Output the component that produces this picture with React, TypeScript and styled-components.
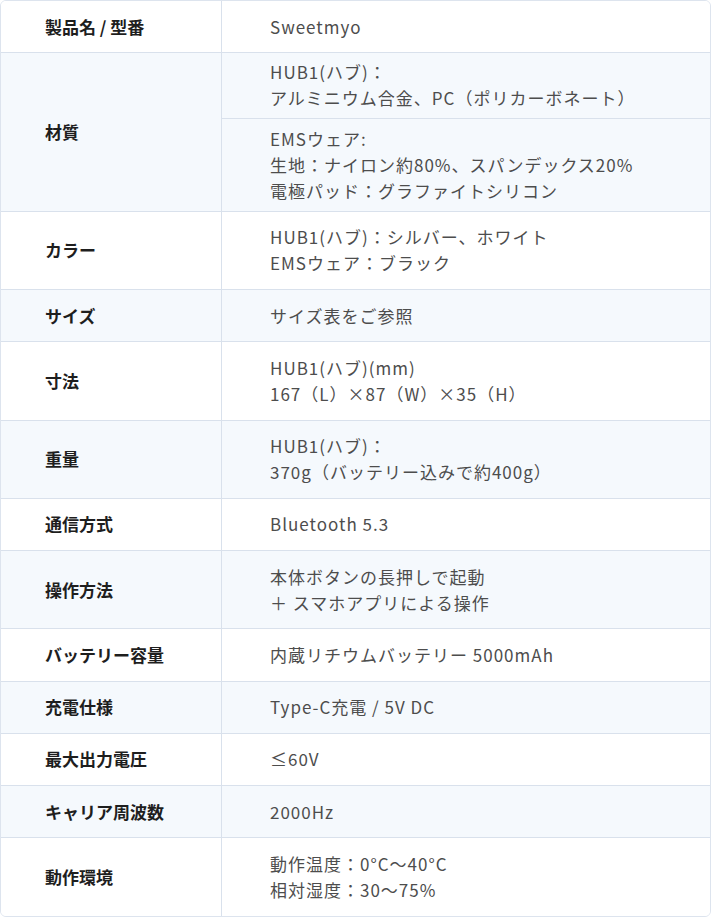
import React from 'react'
import styled, { createGlobalStyle } from 'styled-components'

const GlobalStyle = createGlobalStyle`
  body {
    margin: 0;
    background: #ffffff;
    font-family: "Noto Sans CJK JP", "Noto Sans", sans-serif;
  }
`

const Table = styled.div`
  width: 711px;
  box-sizing: border-box;
  border: 1px solid #dde4ee;
  border-radius: 6px;
  overflow: hidden;
`

const Row = styled.div<{ $alt: boolean }>`
  display: grid;
  grid-template-columns: 221px 1fr;
  background: ${p => (p.$alt ? '#f5f9fd' : '#ffffff')};
  & + & {
    border-top: 1px solid #d9e1ec;
  }
`

const Label = styled.div`
  display: flex;
  align-items: center;
  box-sizing: border-box;
  padding: 12.63px 16px 12.63px 44px;
  border-right: 1px solid #d9e1ec;
  font-size: 17px;
  line-height: 26px;
  font-weight: 700;
  color: #1e1e1e;
`

const Value = styled.div`
  display: flex;
  flex-direction: column;
  justify-content: center;
  padding: 12.63px 16px 12.63px 48px;
  font-size: 17px;
  line-height: 26px;
  letter-spacing: 1px;
  color: #4d4d4d;
`

const SubList = styled.div`
  display: flex;
  flex-direction: column;
`

const SubCell = styled.div`
  padding: 6px 16px 7px 48px;
  font-size: 17px;
  line-height: 26px;
  letter-spacing: 1px;
  color: #4d4d4d;
  & + & {
    border-top: 1px solid #d9e1ec;
    padding-top: 6.5px;
  }
`

type Spec = { label: string; lines?: string[]; groups?: string[][] }

const specs: Spec[] = [
  { label: '製品名 / 型番', lines: ['Sweetmyo'] },
  {
    label: '材質',
    groups: [
      ['HUB1(ハブ)：', 'アルミニウム合金、PC（ポリカーボネート）'],
      ['EMSウェア:', '生地：ナイロン約80%、スパンデックス20%', '電極パッド：グラファイトシリコン'],
    ],
  },
  { label: 'カラー', lines: ['HUB1(ハブ)：シルバー、ホワイト', 'EMSウェア：ブラック'] },
  { label: 'サイズ', lines: ['サイズ表をご参照'] },
  { label: '寸法', lines: ['HUB1(ハブ)(mm)', '167（L）×87（W）×35（H）'] },
  { label: '重量', lines: ['HUB1(ハブ)：', '370g（バッテリー込みで約400g）'] },
  { label: '通信方式', lines: ['Bluetooth 5.3'] },
  { label: '操作方法', lines: ['本体ボタンの長押しで起動', '＋ スマホアプリによる操作'] },
  { label: 'バッテリー容量', lines: ['内蔵リチウムバッテリー 5000mAh'] },
  { label: '充電仕様', lines: ['Type-C充電 / 5V DC'] },
  { label: '最大出力電圧', lines: ['≤60V'] },
  { label: 'キャリア周波数', lines: ['2000Hz'] },
  { label: '動作環境', lines: ['動作温度：0°C〜40°C', '相対湿度：30〜75%'] },
]

export default function App() {
  return (
    <>
      <GlobalStyle />
      <Table>
        {specs.map((spec, i) => (
          <Row key={spec.label} $alt={i % 2 === 1}>
            <Label>{spec.label}</Label>
            {spec.groups ? (
              <SubList>
                {spec.groups.map((group, g) => (
                  <SubCell key={g}>
                    {group.map(line => (
                      <div key={line}>{line}</div>
                    ))}
                  </SubCell>
                ))}
              </SubList>
            ) : (
              <Value>
                {spec.lines?.map(line => (
                  <div key={line}>{line}</div>
                ))}
              </Value>
            )}
          </Row>
        ))}
      </Table>
    </>
  )
}
